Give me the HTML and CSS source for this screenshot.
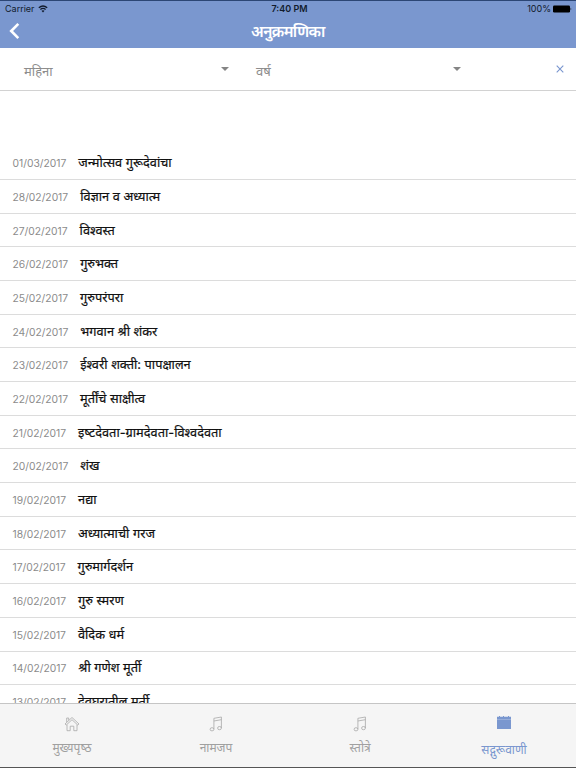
FILE: index.html
```html
<!DOCTYPE html>
<html lang="hi">
<head>
    <meta charset="UTF-8">
    <meta name="viewport" content="width=device-width, initial-scale=1.0">
    <title>अनुक्रमणिका</title>
    <link rel="stylesheet" href="styles.css">
</head>
<body>
    <header class="header">
        <div class="status">
            <div class="carrier">
                <span>Carrier</span>
                <svg width="10" height="8" viewBox="0 0 10 8">
                    <path d="M.8 2.8Q5-.8 9.2 2.8M2.4 4.5Q5 2.3 7.6 4.5" fill="none" stroke="#111b2d" stroke-width="1.3"/>
                    <path d="M3.5 5.8Q5 4.6 6.5 5.8L5 7.5z" fill="#111b2d"/>
                </svg>
            </div>
            <div class="time">7:40 PM</div>
            <div class="battery">
                <span>100%</span>
                <svg width="19" height="8" viewBox="0 0 19 8">
                    <rect x="0" y=".5" width="17" height="7" rx="1.3"/>
                    <path d="M17.6 2.5q1.4 1.5 0 3z"/>
                </svg>
            </div>
        </div>
        <div class="nav">
            <svg class="back" width="12" height="18" viewBox="0 0 12 18">
                <path d="M10.3 1.8L3.2 9l7.1 7.2" fill="none" stroke="#fff" stroke-width="2.6"/>
            </svg>
            <h1 class="title">अनुक्रमणिका</h1>
        </div>
    </header>

    <div class="filters">
        <div class="select"><span>महिना</span><i class="arrow"></i></div>
        <div class="select"><span>वर्ष</span><i class="arrow"></i></div>
        <svg class="clear" width="8" height="8" viewBox="0 0 8 8">
            <path d="M.7.7l6.6 6.6M7.3.7L.7 7.3" stroke="#7996cf" stroke-width="1.1"/>
        </svg>
    </div>

    <main class="list">
        <div class="row"><span class="date">01/03/2017</span><span class="name">जन्मोत्सव गुरूदेवांचा</span></div>
        <div class="row"><span class="date">28/02/2017</span><span class="name">विज्ञान व अध्यात्म</span></div>
        <div class="row"><span class="date">27/02/2017</span><span class="name">विश्वस्त</span></div>
        <div class="row"><span class="date">26/02/2017</span><span class="name">गुरुभक्त</span></div>
        <div class="row"><span class="date">25/02/2017</span><span class="name">गुरुपरंपरा</span></div>
        <div class="row"><span class="date">24/02/2017</span><span class="name">भगवान श्री शंकर</span></div>
        <div class="row"><span class="date">23/02/2017</span><span class="name">ईश्वरी शक्ती: पापक्षालन</span></div>
        <div class="row"><span class="date">22/02/2017</span><span class="name">मूर्तींचे साक्षीत्व</span></div>
        <div class="row"><span class="date">21/02/2017</span><span class="name">इष्&zwj;टदेवता-ग्रामदेवता-विश्वदेवता</span></div>
        <div class="row"><span class="date">20/02/2017</span><span class="name">शंख</span></div>
        <div class="row"><span class="date">19/02/2017</span><span class="name">नद्या</span></div>
        <div class="row"><span class="date">18/02/2017</span><span class="name">अध्यात्माची गरज</span></div>
        <div class="row"><span class="date">17/02/2017</span><span class="name">गुरुमार्गदर्शन</span></div>
        <div class="row"><span class="date">16/02/2017</span><span class="name">गुरु स्मरण</span></div>
        <div class="row"><span class="date">15/02/2017</span><span class="name">वैदिक धर्म</span></div>
        <div class="row"><span class="date">14/02/2017</span><span class="name">श्री गणेश मूर्ती</span></div>
        <div class="row"><span class="date">13/02/2017</span><span class="name">देवघरातील मूर्ती</span></div>
    </main>

    <footer class="tabs">
        <div class="tab">
            <svg width="16" height="16" viewBox="0 0 16 16">
                <path d="M1 8L8 1.5 15 8l-1.3 1L8 3.7 2.3 9zM3 8.7v6h3.2v-4.5h3.6v4.5H13v-6M2.7 6V2h2v2.3"/>
            </svg>
            <span>मुख्यपृष्&zwj;ठ</span>
        </div>
        <div class="tab">
            <svg width="16" height="16" viewBox="0 0 16 16">
                <path d="M5.9 13.2V2.3L13.4 1v11M5.9 5l7.5-1.3"/>
                <ellipse cx="4" cy="13.3" rx="1.9" ry="1.6"/>
                <ellipse cx="11.5" cy="12.1" rx="1.9" ry="1.6"/>
            </svg>
            <span>नामजप</span>
        </div>
        <div class="tab">
            <svg width="16" height="16" viewBox="0 0 16 16">
                <path d="M5.9 13.2V2.3L13.4 1v11M5.9 5l7.5-1.3"/>
                <ellipse cx="4" cy="13.3" rx="1.9" ry="1.6"/>
                <ellipse cx="11.5" cy="12.1" rx="1.9" ry="1.6"/>
            </svg>
            <span>स्तोत्रे</span>
        </div>
        <div class="tab active">
            <svg width="14" height="14" viewBox="0 0 14 14">
                <path class="solid" d="M0 .8h2V0h1v.8h3V0h1v.8h4V0h1v.8h2v2.6H0zM0 3.8h14V13H0z"/>
            </svg>
            <span>सद्गुरूवाणी</span>
        </div>
    </footer>
</body>
</html>
```

FILE: styles.css
```css
* {
    box-sizing: border-box;
}

body {
    margin: 0;
    height: 768px;
    display: flex;
    flex-direction: column;
    overflow: hidden;
    background-color: #fff;
    font-family: Inter, "Noto Sans", "Noto Sans Devanagari", sans-serif;
}

.header {
    flex: none;
    height: 48px;
    background-color: #7a97cf;
    border-top: 1px solid #2c4675;
}

.status {
    display: grid;
    grid-template-columns: 1fr auto 1fr;
    align-items: center;
    height: 15px;
    padding: 0 4px 0 5px;
    font-size: 9px;
    color: #111b2d;
}

.carrier,
.battery {
    display: flex;
    align-items: center;
    gap: 3px;
}

.battery {
    justify-content: flex-end;
    gap: 2px;
}

.time {
    padding-left: 2px;
    font-weight: 600;
}

.nav {
    display: grid;
    grid-template-columns: 40px 1fr 40px;
    align-items: center;
    height: 31px;
}

.back {
    margin-left: 8px;
    margin-bottom: 2px;
}

.title {
    margin: 0;
    text-align: center;
    font-size: 15.5px;
    font-weight: 600;
    letter-spacing: -0.6px;
    line-height: 31px;
    color: #fff;
}

.filters {
    flex: none;
    display: flex;
    align-items: center;
    height: 43px;
    padding: 0 12px 0 24px;
    border-bottom: 1px solid #d2d2d2;
}

.select {
    display: flex;
    align-items: center;
    justify-content: space-between;
    width: 205px;
    margin-right: 27px;
    font-size: 13px;
    line-height: 20px;
    color: #8d8d8d;
}

.select span {
    padding-top: 4px;
}

.arrow {
    border: 4px solid transparent;
    border-top-color: #858585;
    border-bottom: 0;
}

.clear {
    margin-left: auto;
}

.list {
    flex: 1;
    min-height: 0;
    overflow: hidden;
    padding-top: 55.2px;
}

.row {
    display: flex;
    align-items: center;
    gap: 12px;
    height: 33.7px;
    padding: 1.2px 0 0 12.5px;
    border-bottom: 1px solid #dcdcdc;
    white-space: nowrap;
}

.date {
    font-size: 10.3px;
    color: #8b8b8b;
}

.name {
    font-size: 12.8px;
    line-height: 20px;
    -webkit-text-stroke: 0.2px #111;
    color: #111;
}

.tabs {
    flex: none;
    display: grid;
    grid-template-columns: repeat(4, 1fr);
    height: 65px;
    background-color: #f5f5f5;
    border-top: 1px solid #c5c5c5;
    border-bottom: 1px solid #555;
}

.tab {
    display: flex;
    flex-direction: column;
    align-items: center;
    gap: 7px;
    padding-top: 12px;
    font-size: 12px;
    line-height: 18px;
    color: #a0a0a0;
}

.tab svg {
    fill: none;
    stroke: #a8a8a8;
    stroke-width: 0.8;
}

.active {
    gap: 11px;
    color: #7a97cf;
}

.active .solid {
    fill: #7a97cf;
    stroke: none;
}
```
